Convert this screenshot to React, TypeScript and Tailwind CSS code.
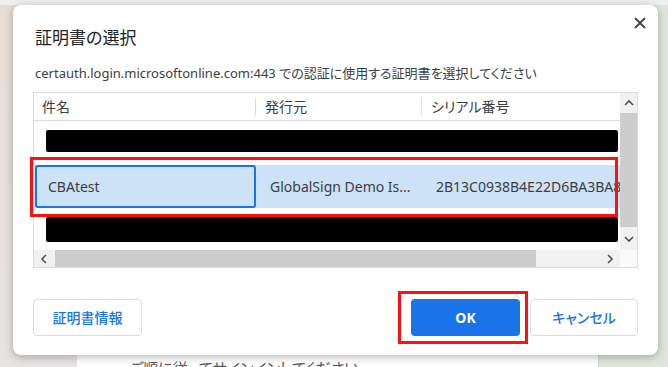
import React from "react";

function Chevron({ dir }: { dir: "up" | "down" | "left" | "right" }) {
  const pts: Record<string, string> = {
    up: "1,6 5,2 9,6",
    down: "1,2 5,6 9,2",
    left: "6,1 2,5 6,9",
    right: "2,1 6,5 2,9",
  };
  const w = dir === "up" || dir === "down" ? 10 : 8;
  const h = dir === "up" || dir === "down" ? 8 : 10;
  return (
    <svg width={w} height={h} viewBox={`0 0 ${w} ${h}`}>
      <polyline points={pts[dir]} fill="none" stroke="#505050" strokeWidth="1.6" />
    </svg>
  );
}

export default function App() {
  return (
    <div className="relative w-[668px] h-[367px] overflow-hidden flex flex-col bg-white font-['Noto_Sans','Noto_Sans_CJK_JP',sans-serif] [font-feature-settings:'palt']">
      {/* background page */}
      <div className="h-[5px] shrink-0 bg-[#eef0f0]" />
      <div className="flex flex-1">
        <div className="w-[77px] bg-linear-to-b from-[#e6ddd5] to-[#e6e4e3]" />
        <div className="w-[521px] bg-white pt-[353px] pl-[53px] text-[15px] leading-[20px] text-[#555] whitespace-nowrap">
          ご順に従ってサインインしてください
        </div>
        <div className="flex-1 bg-[#dfe5dc] border-l border-[#d3d7d2]" />
      </div>

      {/* dialog */}
      <div className="absolute left-[13px] top-[5px] w-[645px] h-[350px] rounded-[8px] bg-white shadow-[0_2px_8px_rgba(0,0,0,0.28)] px-[20px] pt-[21px] flex flex-col">
        <button className="absolute right-[11px] top-[11px] w-[14px] h-[14px] flex items-center justify-center">
          <svg width="14" height="14" viewBox="0 0 14 14">
            <path d="M2 2 L12 12 M12 2 L2 12" stroke="#4a4a4a" strokeWidth="2" />
          </svg>
        </button>

        <div className="pl-[2px] text-[17px] leading-[24px] text-[#202124]">証明書の選択</div>
        <div className="mt-[13px] pl-[2px] text-[13px] leading-[20px] text-[#3c4043] whitespace-nowrap">
          certauth.login.microsoftonline.com:443 での認証に使用する証明書を選択してください
        </div>

        {/* table */}
        <div className="mt-[9px] h-[176px] border border-[#dadce0] flex flex-col">
          <div className="flex h-[157px]">
            <div className="flex-1 min-w-0 flex flex-col">
              <div className="h-[28px] flex items-center border-b border-[#dadce0] text-[14px] text-[#3c4043]">
                <div className="w-[221px] pl-[8px]">件名</div>
                <div className="w-px h-[18px] bg-[#dadce0]" />
                <div className="w-[165px] pl-[9px]">発行元</div>
                <div className="w-px h-[18px] bg-[#dadce0]" />
                <div className="flex-1 pl-[9px]">シリアル番号</div>
              </div>
              <div className="h-[44px] pl-[12px] pr-[2px] pt-[9px]">
                <div className="h-[22px] bg-black rounded-[2px]" />
              </div>
              <div className="relative h-[43px] flex bg-[#cde1f7] text-[14px] text-[#3c4043] whitespace-nowrap">
                <div className="ml-[1px] w-[221px] border-2 border-[#1a73e8] rounded-[3px] pl-[11px] flex items-center">
                  CBAtest
                </div>
                <div className="w-[166px] pl-[14px] flex items-center">GlobalSign Demo Is...</div>
                <div className="flex-1 min-w-0 pl-[14px] flex items-center overflow-hidden">
                  2B13C0938B4E22D6BA3BA8D0F1
                </div>
                <div className="absolute z-10 -left-[4px] -top-[8px] right-[2px] -bottom-[9px] border-[3px] border-[#ff1010]" />
              </div>
              <div className="h-[42px] pl-[12px] pr-[2px] pt-[9px]">
                <div className="h-[25px] bg-black rounded-[2px]" />
              </div>
            </div>
            <div className="w-[17px] bg-[#f1f1f1] flex flex-col">
              <div className="h-[20px] flex items-center justify-center">
                <Chevron dir="up" />
              </div>
              <div className="h-[114px] bg-[#cdcdcd]" />
              <div className="flex-1 flex items-center justify-center">
                <Chevron dir="down" />
              </div>
            </div>
          </div>
          <div className="flex h-[17px]">
            <div className="flex-1 flex bg-[#f1f1f1]">
              <div className="w-[20px] flex items-center justify-center">
                <Chevron dir="left" />
              </div>
              <div className="ml-[1px] w-[481px] bg-[#cdcdcd]" />
              <div className="flex-1 flex items-center justify-end pr-[6px]">
                <Chevron dir="right" />
              </div>
            </div>
            <div className="w-[17px] bg-[#fafafa]" />
          </div>
        </div>

        {/* buttons */}
        <div className="mt-[31px] flex items-center">
          <button className="w-[109px] h-[37px] rounded-[4px] border border-[#dadce0] text-[14px] font-medium text-[#1a73e8]">
            証明書情報
          </button>
          <div className="relative ml-auto">
            <button className="w-[109px] h-[37px] rounded-[4px] bg-[#1a73e8] text-[14px] font-bold text-white">
              OK
            </button>
            <div className="absolute -left-[13px] -top-[8px] -right-[8px] -bottom-[8px] border-[3px] border-[#ff1010]" />
          </div>
          <button className="ml-[10px] w-[108px] h-[37px] rounded-[4px] border border-[#dadce0] text-[14px] font-medium text-[#1a73e8]">
            キャンセル
          </button>
        </div>
      </div>
    </div>
  );
}
